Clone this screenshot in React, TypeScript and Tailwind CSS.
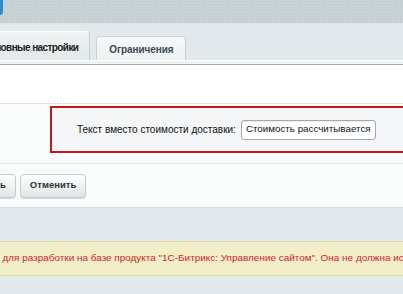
import React from "react";

export default function App() {
  return (
    <div className="w-[403px] h-[294px] overflow-hidden bg-[#e3eaed] font-['Liberation_Sans',Arial,sans-serif] flex flex-col">
      {/* top patterned band */}
      <div className="h-[23px] shrink-0 bg-[#c9d3d5] bg-[radial-gradient(#bcc7c9_0.6px,transparent_0.8px)] bg-[length:3px_3px]">
        <div className="w-[3px] h-[15px] bg-[#2a8ccb] rounded-br-[3px]" />
      </div>

      {/* tab bar */}
      <div className="shrink-0 bg-[#e1e9ec]">
        <div className="h-[37px] flex items-end gap-[6px] ml-[-29px]">
          <div className="h-[29px] px-[11px] pt-[8px] bg-[linear-gradient(#eef2f3,#e2e9eb)] border border-b-0 border-[#c5cfd2] border-t-white rounded-t-[4px] text-[10px] font-bold tracking-[-0.6px] text-[#222] whitespace-nowrap">
            Основные настройки
          </div>
          <div className="h-[24px] px-[12px] pt-[5px] bg-[linear-gradient(#f6f8f9,#eef2f3)] border border-b-0 border-[#c9d2d5] rounded-t-[4px] text-[10px] font-bold tracking-[-0.1px] text-[#3b4a50] whitespace-nowrap">
            Ограничения
          </div>
        </div>
        <div className="h-[4px] bg-[#edf2f3] border-t border-white" />
        <div className="h-[1px] bg-[#9ea8ab]" />
      </div>

      {/* content */}
      <div className="shrink-0 bg-white h-[38px]" />
      <div className="shrink-0 bg-[#fafbfb] border-t border-[#dde3e5] h-[60px] pt-[2px]">
        <div className="ml-[50px] w-[370px] h-[47px] border-2 border-[#c8151c] bg-[#f4f6f7] flex items-center pl-[25px] gap-[5px]">
          <span className="text-[10px] text-[#111] whitespace-nowrap">Текст вместо стоимости доставки:</span>
          <div className="w-[135px] h-[20px] rounded-[3px] border border-[#a3a9ac] bg-white flex items-center pl-[4px] text-[9.8px] text-[#111] whitespace-nowrap shadow-[inset_0_1px_1px_rgba(0,0,0,0.08)]">
            Стоимость рассчитывается
          </div>
        </div>
      </div>

      {/* buttons */}
      <div className="shrink-0 h-[44px] bg-[#fbfcfc] border-t border-[#e0e5e7] flex items-center gap-[4px] ml-[-57px]">
        <button className="h-[24px] px-[9px] rounded-[4px] border border-[#c3cbce] bg-[linear-gradient(#ffffff,#dfe6e8)] shadow-[0_1px_1px_rgba(0,0,0,0.15)] text-[9.5px] font-bold text-[#333] whitespace-nowrap">
          Применить
        </button>
        <button className="h-[24px] px-[9px] rounded-[4px] border border-[#c3cbce] bg-[linear-gradient(#ffffff,#dfe6e8)] shadow-[0_1px_1px_rgba(0,0,0,0.15)] text-[9.5px] font-bold text-[#333] whitespace-nowrap">
          Отменить
        </button>
      </div>

      {/* lower band */}
      <div className="shrink-0 h-[34px] border-t border-[#d7dfe2]" />

      {/* notice */}
      <div className="shrink-0 h-[35px] bg-[#f2efc8] border-y border-[#ddd7a6] flex items-center ml-[-31px] text-[9.95px] text-[#d2232a] whitespace-nowrap">
        только для разработки на базе продукта "1С-Битрикс: Управление сайтом". Она не должна использоваться
      </div>
    </div>
  );
}
